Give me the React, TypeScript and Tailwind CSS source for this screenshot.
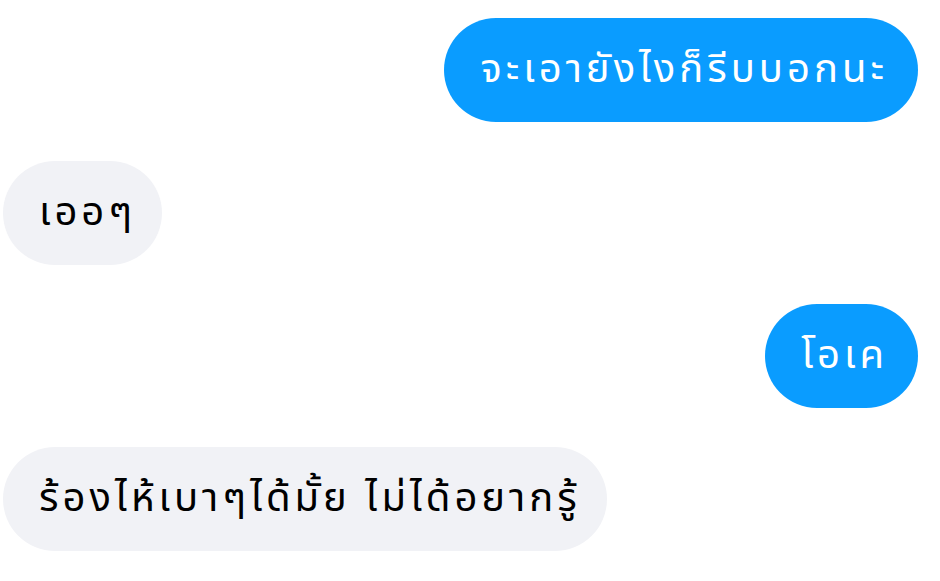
const messages = [
  { mine: true, text: "จะเอายังไงก็รีบบอกนะ" },
  { mine: false, text: "เออๆ" },
  { mine: true, text: "โอเค" },
  { mine: false, text: "ร้องไห้เบาๆได้มั้ย ไม่ได้อยากรู้" },
];

export default function App() {
  return (
    <div className="w-[940px] h-[581px] bg-white overflow-hidden pt-[18px] pl-[3px] pr-[22px] flex flex-col gap-[39px] font-['Noto_Sans_Thai','Noto_Sans',sans-serif]">
      {messages.map((m, i) => (
        <div key={i} className={m.mine ? "flex justify-end" : "flex justify-start"}>
          <div
            className={
              m.mine
                ? "h-[104px] flex items-center rounded-full bg-[#0a9cff] text-white text-[40px] tracking-[4px] pl-[36px] pr-[30px] whitespace-nowrap"
                : "h-[104px] flex items-center rounded-full bg-[#f1f2f6] text-black text-[40px] tracking-[4px] pl-[36px] pr-[26px] whitespace-nowrap"
            }
          >
            {m.text}
          </div>
        </div>
      ))}
    </div>
  );
}
